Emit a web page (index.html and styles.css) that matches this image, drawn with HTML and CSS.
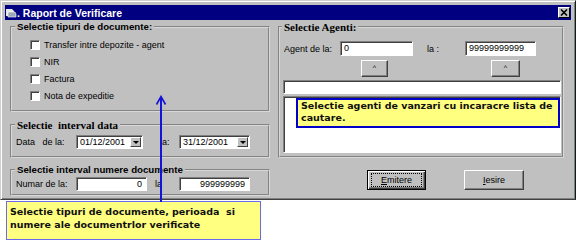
FILE: index.html
```html
<!DOCTYPE html>
<html lang="ro">
<head>
    <meta charset="UTF-8">
    <title>Raport de Verificare</title>
    <link rel="stylesheet" href="styles.css">
</head>
<body>
    <div class="window">
        <div class="titlebar">
            <svg class="app-icon" width="12" height="11" viewBox="0 0 12 11">
                <path d="M1 2h6l2 2v5H1z" fill="#e8e8e8"/>
                <path d="M3 5h7l1 2v3H3z" fill="#9aa8b8" stroke="#ffffff" stroke-width="0.6"/>
            </svg>
            <span class="title">. Raport de Verificare</span>
            <span class="close">
                <svg width="8" height="7" viewBox="0 0 8 7"><path d="M1 0.5l6 6M7 0.5l-6 6" stroke="#000" stroke-width="1.6"/></svg>
            </span>
        </div>

        <div class="client">
            <div class="col-left">
                <fieldset class="group g-docs">
                    <legend>Selectie tipuri de documente:</legend>
                    <div class="checks">
                        <label class="check"><span class="box"></span>Transfer intre depozite - agent</label>
                        <label class="check"><span class="box"></span>NIR</label>
                        <label class="check"><span class="box"></span>Factura</label>
                        <label class="check"><span class="box"></span>Nota de expeditie</label>
                    </div>
                </fieldset>

                <fieldset class="group g-data">
                    <legend class="serif">Selectie&nbsp; interval data</legend>
                    <div class="row row-data">
                        <span class="lbl">Data &nbsp; de la:</span>
                        <span class="combo"><span class="val">01/12/2001</span><span class="drop"></span></span>
                        <span class="lbl2">la:</span>
                        <span class="combo combo2"><span class="val">31/12/2001</span><span class="drop"></span></span>
                    </div>
                </fieldset>

                <fieldset class="group g-nr">
                    <legend>Selectie interval numere documente</legend>
                    <div class="row row-nr">
                        <span class="lbl">Numar de la:</span>
                        <span class="field num num1">0</span>
                        <span class="lbl3">la</span>
                        <span class="field num num2">999999999</span>
                    </div>
                </fieldset>
            </div>

            <div class="col-right">
                <fieldset class="group g-agenti">
                    <legend class="serif">Selectie Agenti:</legend>
                    <div class="agenti">
                        <div class="agent-row">
                            <span class="lbl-agent">Agent de la:</span>
                            <span class="field ag1">0</span>
                            <span class="lbl-la">la :</span>
                            <span class="field ag2">99999999999</span>
                        </div>
                        <div class="search-row">
                            <span class="btn small s1">^</span>
                            <span class="btn small s2">^</span>
                        </div>
                        <div class="field search-text"></div>
                        <div class="field list">
                            <div class="tip tip-agenti">Selectie agenti de vanzari cu incaracre lista de cautare.</div>
                        </div>
                    </div>
                </fieldset>
                <div class="actions">
                    <span class="btn default"><span class="focus"><u>E</u>mitere</span></span>
                    <span class="btn iesire"><u>I</u>esire</span>
                </div>
            </div>
        </div>
    </div>

    <div class="tip tip-docs">Selectie tipuri de documente, perioada&nbsp; si numere ale documentrlor verificate</div>

    <svg class="arrow" width="13" height="107" viewBox="0 0 13 107">
        <path d="M6 3V107" stroke="#1414d8" stroke-width="2"/>
        <path d="M1.5 9.5L6 1.5L10.5 9.5" fill="none" stroke="#1414d8" stroke-width="1.6"/>
    </svg>
</body>
</html>
```

FILE: styles.css
```css
body {
    margin: 0;
    background: #fff;
    font-family: "Liberation Sans", Arial, sans-serif;
    font-size: 9px;
    color: #000;
}

/* window frame */
.window {
    width: 576px;
    height: 200px;
    box-sizing: border-box;
    background: #c0c0c0;
    border: 1px solid;
    border-color: #d0d0d0 #0c2018 #404040 #d0d0d0;
    box-shadow: inset 1px 1px #fff, inset -1px -1px #808080;
    padding: 4px 4px 0 4px;
}
.titlebar {
    height: 15px;
    background: #000080;
    color: #fff;
    display: flex;
    align-items: center;
    font-weight: bold;
    font-size: 10.5px;
    padding-right: 1px;
}
.app-icon {
    flex: none;
}
.close {
    margin-left: auto;
    width: 12px;
    height: 11px;
    box-sizing: border-box;
    background: #c0c0c0;
    border: 1px solid;
    border-color: #fff #000 #000 #fff;
    display: flex;
    align-items: center;
    justify-content: center;
}

.client {
    display: flex;
    gap: 8px;
    height: 178px;
    padding-left: 5px;
}
.col-left {
    width: 260px;
}
.col-right {
    width: 286px;
}

/* group boxes */
.group {
    margin: 0;
    padding: 0;
    border: 2px groove #d8d8d8;
    box-sizing: border-box;
    min-width: 0;
}
.group legend {
    margin-left: 3px;
    padding: 0 2px;
    font-weight: bold;
    font-size: 9.7px;
    line-height: 13px;
}
.group legend.serif {
    font-family: "Liberation Serif", "Times New Roman", serif;
    font-size: 11px;
    line-height: 14px;
}
.g-docs {
    height: 92px;
}
.g-data {
    height: 40px;
    margin-top: 6px;
}
.g-nr {
    height: 33px;
    margin-top: 5px;
}
.g-agenti {
    height: 138px;
}
.g-agenti legend {
    margin-left: 2px;
}

/* checkboxes */
.checks {
    padding: 3px 0 0 18px;
}
.check {
    display: flex;
    align-items: center;
    height: 17px;
}
.box {
    width: 10px;
    height: 10px;
    box-sizing: border-box;
    background: #fff;
    border: 1px solid;
    border-color: #808080 #fff #fff #808080;
    box-shadow: inset 1px 1px #404040;
    margin-right: 4px;
}

/* sunken fields */
.field {
    background: #fff;
    box-sizing: border-box;
    border: 1px solid;
    border-color: #808080 #fff #fff #808080;
    box-shadow: inset 1px 1px #404040;
}

.row {
    display: flex;
    align-items: center;
    padding-left: 4px;
}
.row-data {
    padding-top: 3px;
}
.row-nr {
    padding-top: 1px;
}
.lbl {
    width: 60px;
}
.combo {
    display: flex;
    width: 67px;
    height: 14px;
    box-sizing: border-box;
    background: #fff;
    border: 1px solid;
    border-color: #808080 #fff #fff #808080;
    box-shadow: inset 1px 1px #404040;
    padding: 1px 1px 1px 3px;
}
.combo2 {
    width: 71px;
}
.combo .val {
    flex: 1;
    line-height: 11px;
}
.drop {
    width: 11px;
    box-sizing: border-box;
    background: #c0c0c0;
    border: 1px solid;
    border-color: #fff #404040 #404040 #fff;
    position: relative;
}
.drop::after {
    content: "";
    position: absolute;
    left: 2px;
    top: 3px;
    border-left: 3px solid transparent;
    border-right: 3px solid transparent;
    border-top: 3px solid #000;
}
.lbl2 {
    width: 19px;
    padding-left: 17px;
}
.num {
    height: 14px;
    text-align: right;
    padding-right: 4px;
    line-height: 12px;
}
.num1 {
    width: 71px;
}
.num2 {
    width: 71px;
}
.lbl3 {
    width: 24px;
    padding-left: 8px;
}

/* agents */
.agenti {
    padding: 7px 1px 0 3px;
}
.agent-row {
    display: flex;
    align-items: center;
    padding-left: 1px;
}
.lbl-agent {
    width: 56px;
}
.ag1,
.ag2 {
    height: 15px;
    padding-left: 3px;
    line-height: 13px;
}
.ag1 {
    width: 73px;
}
.ag2 {
    width: 71px;
}
.lbl-la {
    width: 38px;
    padding-left: 14px;
}
.search-row {
    display: flex;
    margin-top: 4px;
}
.btn {
    display: flex;
    align-items: center;
    justify-content: center;
    box-sizing: border-box;
    background: #c0c0c0;
    border: 1px solid;
    border-color: #fff #404040 #404040 #fff;
    box-shadow: inset -1px -1px #808080;
}
.small {
    height: 17px;
    font-size: 7px;
    padding-bottom: 2px;
}
.s1 {
    width: 27px;
    margin-left: 78px;
}
.s2 {
    width: 29px;
    margin-left: 103px;
}
.search-text {
    height: 14px;
    margin-top: 3px;
}
.list {
    position: relative;
    height: 57px;
    margin-top: 2px;
}

/* yellow notes */
.tip {
    box-sizing: border-box;
    background: #ffff80;
    font-family: "DejaVu Sans", Verdana, sans-serif;
    font-weight: bold;
    font-size: 9.5px;
    color: #101010;
}
.tip-agenti {
    position: absolute;
    left: 12px;
    top: 1px;
    width: 264px;
    height: 30px;
    border: 2px solid #0000c8;
    padding: 0 0 0 3px;
    line-height: 12px;
}
.tip-docs {
    position: absolute;
    left: 6px;
    top: 201px;
    width: 255px;
    height: 39px;
    border: 1px solid #6a6af0;
    padding: 3px 0 0 3px;
    line-height: 13px;
}
.arrow {
    position: absolute;
    left: 155px;
    top: 95px;
}

/* buttons */
.actions {
    display: flex;
    margin-top: 12px;
}
.actions .btn {
    height: 20px;
}
.default {
    width: 59px;
    margin-left: 89px;
    border-color: #000;
    box-shadow: inset 1px 1px #fff, inset -1px -1px #404040, inset -2px -2px #808080;
}
.focus {
    display: flex;
    align-items: center;
    justify-content: center;
    width: 49px;
    height: 12px;
    outline: 1px dotted #000;
}
.iesire {
    width: 60px;
    margin-left: 38px;
}
```
